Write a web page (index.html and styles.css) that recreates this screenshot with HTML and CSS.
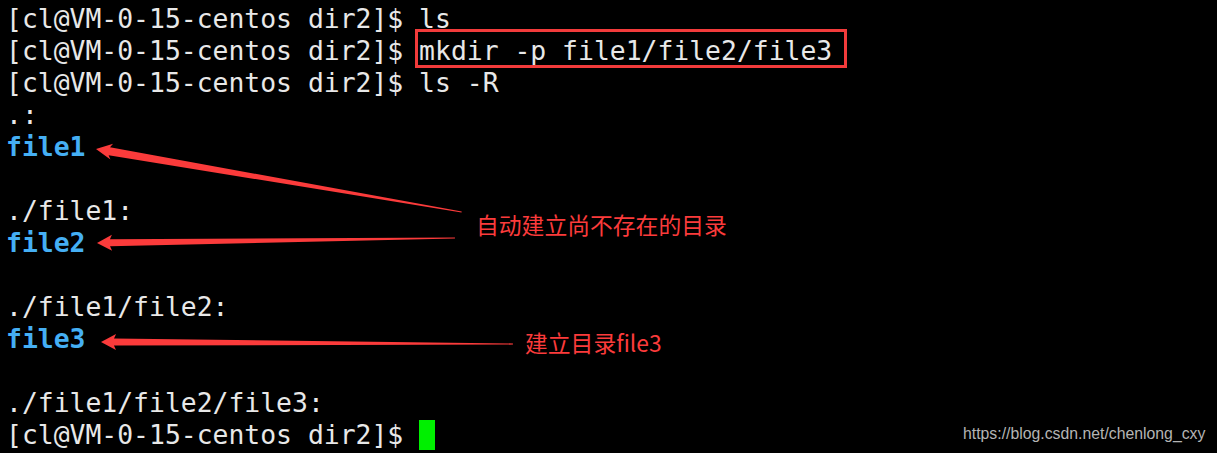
FILE: index.html
```html
<!DOCTYPE html>
<html lang="zh-CN">
<head>
<meta charset="utf-8">
<title>mkdir -p</title>
<link rel="stylesheet" href="styles.css">
</head>
<body>
<div class="term">
  <div class="line">[cl@VM-0-15-centos dir2]$ ls</div>
  <div class="line">[cl@VM-0-15-centos dir2]$ <span class="boxed">mkdir -p file1/file2/file3</span></div>
  <div class="line">[cl@VM-0-15-centos dir2]$ ls -R</div>
  <div class="line">.:</div>
  <div class="line dir">file1</div>
  <div class="line"></div>
  <div class="line">./file1:</div>
  <div class="line dir">file2</div>
  <div class="line"></div>
  <div class="line">./file1/file2:</div>
  <div class="line dir">file3</div>
  <div class="line"></div>
  <div class="line">./file1/file2/file3:</div>
  <div class="line">[cl@VM-0-15-centos dir2]$ <span class="cursor"></span></div>
</div>

<svg class="arrows" width="1217" height="453" viewBox="0 0 1217 453" xmlns="http://www.w3.org/2000/svg">
  <g fill="#fb3b3b">
    <g transform="translate(96 149) rotate(9.77)">
      <polygon points="0,0 16,-8 13.5,-4 371,-0.5 371,0.5 13.5,4 16,8"/>
    </g>
    <g transform="translate(97 243) rotate(-0.8)">
      <polygon points="0,0 15,-8 13,-3.5 358,-0.6 358,0.6 13,3.5 15,8"/>
    </g>
    <g transform="translate(101 342) rotate(0.28)">
      <polygon points="0,0 15,-8 13,-3.5 412,-0.6 412,0.6 13,3.5 15,8"/>
    </g>
  </g>
</svg>

<div class="note note-1">自动建立尚不存在的目录</div>
<div class="note note-2">建立目录file3</div>
<div class="watermark">https://blog.csdn.net/chenlong_cxy</div>
</body>
</html>
```

FILE: styles.css
```css
html, body {
  margin: 0;
  padding: 0;
  background: #000;
}

body {
  position: relative;
  width: 1217px;
  height: 453px;
  overflow: hidden;
}

.term {
  padding: 3px 0 0 6px;
  font-family: "DejaVu Sans Mono", "Liberation Mono", monospace;
  font-size: 26.4px;
  line-height: 32px;
  color: #e8e8e8;
}

.line {
  height: 32px;
  white-space: pre;
}

.dir {
  color: #45aff4;
  font-weight: bold;
}

.boxed {
  position: relative;
  display: inline-block;
  height: 32px;
  vertical-align: top;
}

.boxed::after {
  content: "";
  position: absolute;
  top: -6px;
  bottom: -1px;
  left: -4px;
  right: -15px;
  border: 3px solid #f23b3b;
}

.cursor {
  display: inline-block;
  width: 16px;
  height: 30px;
  margin-top: 1px;
  vertical-align: top;
  background: #00f000;
}

.arrows {
  position: absolute;
  left: 0;
  top: 0;
}

.note {
  position: absolute;
  font-family: "Noto Sans CJK SC", "Noto Sans", sans-serif;
  font-size: 22.8px;
  line-height: 30px;
  color: #fb3b3b;
  white-space: nowrap;
}

.note-1 {
  left: 476px;
  top: 210px;
}

.note-2 {
  left: 525px;
  top: 328px;
}

.watermark {
  position: absolute;
  left: 963px;
  top: 424px;
  font-family: "Liberation Sans", Arial, sans-serif;
  font-size: 15.8px;
  line-height: 20px;
  color: #b4b4b4;
  white-space: nowrap;
}
```
